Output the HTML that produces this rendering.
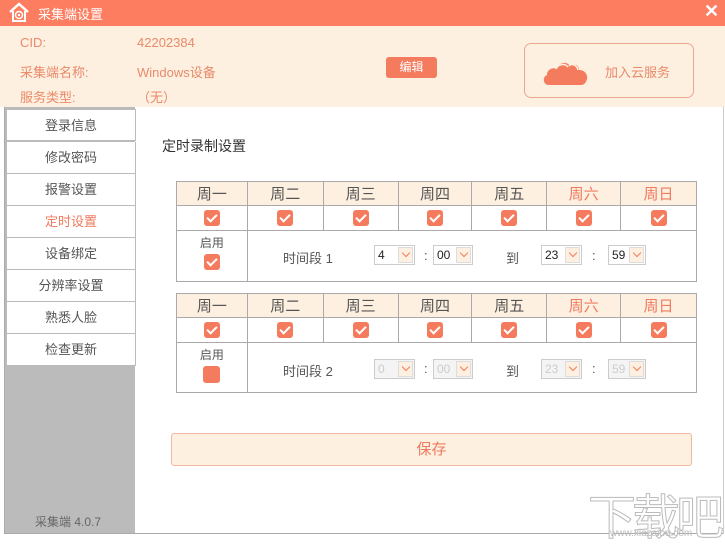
<!DOCTYPE html><html><head><meta charset="utf-8"><style>
*{margin:0;padding:0;box-sizing:border-box}
body{width:725px;height:543px;background:#fff;font-family:"Liberation Sans","Noto Sans CJK SC",sans-serif;position:relative;overflow:hidden;font-size:13px}
.a{position:absolute}
.title{left:0;top:0;width:725px;height:26px;background:#fd7d60;color:#fff}
.hdr{left:0;top:26px;width:725px;height:81px;background:#fdf0e0}
.lbl{color:#e98a6a;font-size:13px}
.side{left:4px;top:107px;width:131px;height:427px;border-left:1px solid #aaa;background:#bbb}
.item{position:absolute;left:1px;width:130px;height:32px;background:#fff;border:1px solid #bbb;border-top:none;text-align:center;line-height:31px;color:#555;font-size:13px}
table{position:absolute;border-collapse:collapse;left:176px;width:521px}
td{border:1px solid #aaa;text-align:center;padding:0}
tr.h td{background:#fdf0e0;height:24px;font-size:15px;color:#555}
tr.c td{height:25px}
.cb{display:inline-block;width:16px;height:16px;background:#f57b5e;border-radius:3px;vertical-align:middle;position:relative}
.cb:after{content:"";position:absolute;left:5px;top:2px;width:4px;height:8px;border:solid #fff;border-width:0 2px 2px 0;transform:rotate(45deg)}
.cb.e:after{display:none}
.sel{position:absolute;height:20px;border:1px solid #ccc;background:#fff;font-size:12px;line-height:18px;padding-left:3px;color:#222}
.sel i{position:absolute;right:1px;top:1px;width:15px;height:16px;background:#fdf0e0;border:1px solid #ddd}
.sel i:after{content:"";position:absolute;left:4px;top:2px;width:5px;height:5px;border:solid #f57b5e;border-width:0 1.5px 1.5px 0;transform:rotate(45deg)}
.sel.d{color:#ccc;background:#f4f4f4}
.t{position:absolute;color:#555;font-size:13px}
</style></head><body>
<div class="a title">
<svg class="a" style="left:8px;top:2px" width="22" height="21" viewBox="0 0 22 21"><path d="M2 10L11 2L20 10" stroke="#fff" stroke-width="2.5" fill="none"/><path d="M5 9V19H17V9" stroke="#fff" stroke-width="2" fill="none"/><circle cx="11" cy="13" r="3.5" stroke="#fff" stroke-width="1.5" fill="none"/><circle cx="11" cy="13" r="1.2" fill="#fff"/></svg>
<span class="a" style="left:38px;top:4px;font-size:13px">采集端设置</span>
<span class="a" style="left:704px;top:1px;font-size:18px;font-weight:bold">✕</span>
</div>
<div class="a hdr">
<span class="a lbl" style="left:20px;top:9px">CID:</span>
<span class="a lbl" style="left:137px;top:9px">42202384</span>
<span class="a lbl" style="left:20px;top:36px">采集端名称:</span>
<span class="a lbl" style="left:137px;top:36px">Windows设备</span>
<span class="a lbl" style="left:20px;top:61px">服务类型:</span>
<span class="a lbl" style="left:137px;top:61px">（无）</span>
<div class="a" style="left:386px;top:31px;width:51px;height:21px;background:#f57b5e;border-radius:3px;color:#fff;text-align:center;line-height:20px;font-size:12px">编辑</div>
<div class="a" style="left:524px;top:17px;width:170px;height:55px;border:1px solid #e8a890;border-radius:7px">
<svg class="a" style="left:16px;top:14px" width="48" height="28" viewBox="0 0 48 28"><path d="M8 27C2 27 1 19 6 17C6 11 12 9 16 11C18 4 26 3 29 8C32 5 38 6 38 12C44 12 47 17 46 21C45 25 43 27 40 27Z" fill="#f57b5e"/><path d="M15 11C17 6 24 5 27 9M28 8C31 5 36 7 37 12" stroke="#fdf0e0" stroke-width="1.5" fill="none"/></svg>
<span class="a lbl" style="left:80px;top:18px">加入云服务</span>
</div>
</div>
<div class="a side">
<div class="item" style="top:2px;border-top:1px solid #bbb">登录信息</div>
<div class="item" style="top:35px">修改密码</div>
<div class="item" style="top:67px">报警设置</div>
<div class="item" style="top:99px;color:#f07a5e">定时设置</div>
<div class="item" style="top:131px">设备绑定</div>
<div class="item" style="top:163px">分辨率设置</div>
<div class="item" style="top:195px">熟悉人脸</div>
<div class="item" style="top:227px">检查更新</div>
<span class="a" style="left:30px;top:406px;color:#666;font-size:12px">采集端 4.0.7</span>
</div>
<div class="a" style="left:4px;top:533px;width:720px;border-top:1px solid #aaa"></div>
<div class="a" style="left:723px;top:107px;height:427px;border-left:1px solid #ccc"></div>
<span class="a" style="left:162px;top:136px;font-size:14px;color:#333">定时录制设置</span>

<table style="top:181px"><colgroup><col style="width:71px"><col style="width:76px"><col style="width:75px"><col style="width:74px"><col style="width:75px"><col style="width:74px"><col style="width:76px"></colgroup>
<tr class="h"><td>周一</td><td>周二</td><td>周三</td><td>周四</td><td>周五</td><td style="color:#f07a5e">周六</td><td style="color:#f07a5e">周日</td></tr>
<tr class="c"><td><span class="cb"></span></td><td><span class="cb"></span></td><td><span class="cb"></span></td><td><span class="cb"></span></td><td><span class="cb"></span></td><td><span class="cb"></span></td><td><span class="cb"></span></td></tr>
<tr><td style="height:51px;vertical-align:top;padding-top:3px;font-size:12px;color:#555">启用<br><span class="cb" style="margin-top:3px"></span></td><td colspan="6" style="border-right:1px solid #aaa"></td></tr>
</table>
<table style="top:293px"><colgroup><col style="width:71px"><col style="width:76px"><col style="width:75px"><col style="width:74px"><col style="width:75px"><col style="width:74px"><col style="width:76px"></colgroup>
<tr class="h"><td>周一</td><td>周二</td><td>周三</td><td>周四</td><td>周五</td><td style="color:#f07a5e">周六</td><td style="color:#f07a5e">周日</td></tr>
<tr class="c"><td><span class="cb"></span></td><td><span class="cb"></span></td><td><span class="cb"></span></td><td><span class="cb"></span></td><td><span class="cb"></span></td><td><span class="cb"></span></td><td><span class="cb"></span></td></tr>
<tr><td style="height:50px;vertical-align:top;padding-top:3px;font-size:12px;color:#555">启用<br><span class="cb e" style="margin-top:3px;width:17px;height:17px"></span></td><td colspan="6"></td></tr>
</table>

<span class="t" style="left:283px;top:248px">时间段 1</span>
<div class="sel" style="left:374px;top:245px;width:41px">4<i></i></div>
<span class="t" style="left:424px;top:248px">:</span>
<div class="sel" style="left:433px;top:245px;width:40px">00<i></i></div>
<span class="t" style="left:506px;top:248px">到</span>
<div class="sel" style="left:541px;top:245px;width:41px">23<i></i></div>
<span class="t" style="left:592px;top:248px">:</span>
<div class="sel" style="left:608px;top:245px;width:38px">59<i></i></div>

<span class="t" style="left:283px;top:361px">时间段 2</span>
<div class="sel d" style="left:374px;top:359px;width:41px">0<i></i></div>
<span class="t" style="left:424px;top:361px">:</span>
<div class="sel d" style="left:433px;top:359px;width:40px">00<i></i></div>
<span class="t" style="left:506px;top:361px">到</span>
<div class="sel d" style="left:541px;top:359px;width:41px">23<i></i></div>
<span class="t" style="left:592px;top:361px">:</span>
<div class="sel d" style="left:608px;top:359px;width:38px">59<i></i></div>

<div class="a" style="left:171px;top:433px;width:521px;height:33px;background:#fdf0e0;border:1px solid #f0b8a0;border-radius:3px;text-align:center;line-height:31px;color:#f07a5e;font-size:15px">保存</div>
<span class="a" style="left:588px;top:478px;font-size:48px;color:#fff;-webkit-text-stroke:1px #bbb;letter-spacing:-4px">下载吧</span>
<span class="a" style="left:610px;top:528px;font-size:10px;color:#bbb">www.xiazaiba.com</span>
</body></html>
